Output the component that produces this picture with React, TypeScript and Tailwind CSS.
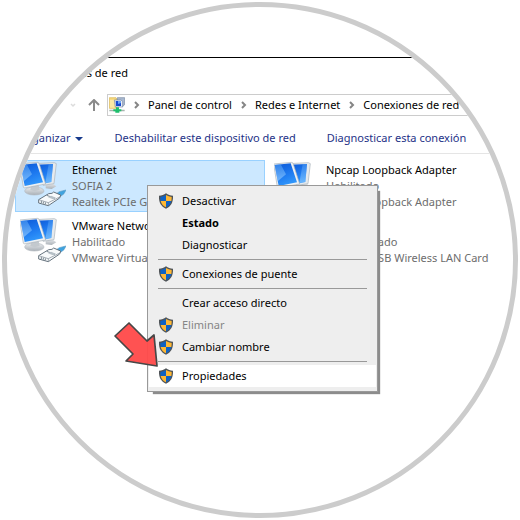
import React from 'react';

const ShieldIcon: React.FC = () => (
    <svg className="h-4 w-4" viewBox="0 0 48 48" aria-hidden="true">
        <path d="M24 1c6 4 13 7 21 7 1 20-6 32-21 39C9 40 2 28 3 8c8 0 15-3 21-7z" fill="#4f5458" />
        <path d="M24 6v18H8C7 20 7 16 7 12c6-1 12-3 17-6z" fill="#0f62c4" />
        <path d="M24 6c5 3 11 5 17 6 0 4 0 8-1 12H24z" fill="#ffb834" />
        <path d="M8 24h16v19C15 39 10 33 8 24z" fill="#ffb834" />
        <path d="M24 24h16c-2 9-7 15-16 19z" fill="#0f62c4" />
    </svg>
);

const NetworkIcon: React.FC = () => (
    <svg className="h-[46px] w-[46px] shrink-0" viewBox="0 0 138 138" aria-hidden="true">
        <defs>
            <linearGradient id="screen" x1="0" y1="0" x2="0.4" y2="1">
                <stop offset="0" stopColor="#0b57d6" />
                <stop offset="0.6" stopColor="#1e7af0" />
                <stop offset="1" stopColor="#2f95fa" />
            </linearGradient>
            <linearGradient id="gloss" x1="0" y1="0" x2="0" y2="1">
                <stop offset="0" stopColor="#4c9df5" />
                <stop offset="1" stopColor="#a4d6ff" />
            </linearGradient>
            <linearGradient id="stand" x1="0" y1="0" x2="0" y2="1">
                <stop offset="0" stopColor="#eceef0" />
                <stop offset="1" stopColor="#a9b0b7" />
            </linearGradient>
        </defs>
        <path d="M77 68l18-2 14 10-14 8-18-2z" fill="url(#stand)" />
        <path d="M42 8l61-3 6 3-7 60-33 5z" fill="#e6eaed" stroke="#a9b2ba" strokeWidth="2" />
        <path d="M46 11l53-2-5 54-24 5z" fill="url(#screen)" />
        <path d="M99 9l-5 54-18 3 10-56z" fill="url(#gloss)" opacity="0.5" />
        <ellipse cx="43" cy="90" rx="29" ry="12" fill="url(#stand)" stroke="#b3bac0" strokeWidth="2" />
        <path d="M34 75l22-3 3 14-15 5-13-4z" fill="#c3c9ce" />
        <path d="M-1 9l53-5 5 2 20 63-64 12-3-3z" fill="#eef1f3" stroke="#a9b2ba" strokeWidth="2" />
        <path d="M2 12l48-5 19 57-55 11z" fill="url(#screen)" />
        <path d="M2 12l18-2 16 30-25 21z" fill="url(#gloss)" opacity="0.6" />
        <path d="M104 102l14-10 20-5-6 11-18 14z" fill="#3fa3e0" stroke="#5a9cc4" strokeWidth="2" />
        <path d="M56 116l30-18 10-1 5-4 21 9-3 9-34 23-29-8z" fill="#f8fafb" stroke="#66737e" strokeWidth="3" />
        <path d="M56 116l29 9v9M85 125l34-17" fill="none" stroke="#7a8791" strokeWidth="2" />
        <path d="M64 120v6M70 122v6M76 124v6M80 103l25 9" fill="none" stroke="#7a8791" strokeWidth="3" />
        <path d="M84 109l15 6 9-5-15-6z" fill="#b6c0c7" />
    </svg>
);

const FolderNetworkIcon: React.FC = () => (
    <svg className="h-4 w-4 shrink-0" viewBox="0 0 48 48" aria-hidden="true">
        <path d="M1 2h20l3 4v28H1z" fill="#f4d67a" stroke="#d9b654" strokeWidth="2" />
        <path d="M3 8h14v24H3z" fill="#fbe9a3" />
        <path d="M25 2h22v20l-5 6H25z" fill="#a9b9d0" stroke="#7787a0" strokeWidth="2" />
        <path d="M16 9h20l5 4v17H19z" fill="#e9edf5" stroke="#7385a5" strokeWidth="2" />
        <path d="M20 12h16v15H21z" fill="#174bd1" />
        <path d="M27 12h9v6l-9 3z" fill="#6ea5f6" />
        <path d="M1 38h46v5H1z" fill="#a7b4ae" />
        <path d="M21 31h9v6h7v6h-6v4H19v-4h-6v-6h8z" fill="#1fbe6c" />
    </svg>
);

const ChevronIcon: React.FC = () => (
    <svg className="h-2 w-2 shrink-0" viewBox="0 0 8 8" fill="none" stroke="#858585" strokeWidth="2" aria-hidden="true">
        <path d="M2 1l3 3-3 3" />
    </svg>
);

interface Adapter {
    name: string;
    status: string;
    device: string;
    selected?: boolean;
}

const adapters: Adapter[] = [
    { name: 'Ethernet', status: 'SOFIA 2', device: 'Realtek PCIe GBE Family', selected: true },
    { name: 'Npcap Loopback Adapter', status: 'Habilitado', device: 'Npcap Loopback Adapter' },
    { name: 'VMware Network Adapter', status: 'Habilitado', device: 'VMware Virtual Ethernet' },
    { name: 'Wi-Fi', status: 'Deshabilitado', device: '802.11n USB Wireless LAN Card' },
];

interface MenuEntry {
    label: string;
    shield?: boolean;
    bold?: boolean;
    disabled?: boolean;
    active?: boolean;
}

const menuGroups: MenuEntry[][] = [
    [{ label: 'Desactivar', shield: true }, { label: 'Estado', bold: true }, { label: 'Diagnosticar' }],
    [{ label: 'Conexiones de puente', shield: true }],
    [
        { label: 'Crear acceso directo' },
        { label: 'Eliminar', shield: true, disabled: true },
        { label: 'Cambiar nombre', shield: true },
    ],
    [{ label: 'Propiedades', shield: true, active: true }],
];

const AdapterTile: React.FC<{ adapter: Adapter }> = ({ adapter }) => (
    <button
        type="button"
        className={`flex h-[52px] w-[250px] gap-[6px] border pl-1 text-left ${
            adapter.selected ? 'border-[#99d1ff] bg-[#cce8ff]' : 'border-transparent'
        }`}
    >
        <NetworkIcon />
        <span className="flex flex-col whitespace-nowrap pt-px leading-4 text-[#6d6d6d]">
            <span className="text-black">{adapter.name}</span>
            <span>{adapter.status}</span>
            <span>{adapter.device}</span>
        </span>
    </button>
);

const ContextMenu: React.FC = () => (
    <div
        role="menu"
        className="absolute left-[140px] top-[178px] w-[231px] border border-[#999] bg-[#eee] px-px pb-1 pt-1 shadow-[4px_4px_1px_-2px_#8c8c8c]"
    >
        {menuGroups.map((group, index) => (
            <div key={index} role="group">
                {index > 0 && <hr className="mx-[9px] my-[3px] border-t border-[#999]" />}
                {group.map((entry) => (
                    <button
                        key={entry.label}
                        type="button"
                        role="menuitem"
                        disabled={entry.disabled}
                        className={`flex h-[22px] w-full items-center gap-2 pl-[9px] text-left ${
                            entry.active ? 'bg-white' : ''
                        } ${entry.bold ? 'font-bold' : ''} ${entry.disabled ? 'text-[#858585]' : 'text-black'}`}
                    >
                        <span className="h-4 w-4 shrink-0">{entry.shield && <ShieldIcon />}</span>
                        {entry.label}
                    </button>
                ))}
            </div>
        ))}
    </div>
);

const crumbs = ['Panel de control', 'Redes e Internet', 'Conexiones de red'];

const App: React.FC = () => (
    <div className="bg-white p-0.5 font-['Noto_Sans','Open_Sans',sans-serif] text-[11px] text-black">
        <main className="relative aspect-square w-full overflow-hidden rounded-full border-[5px] border-[#ccc] bg-white">
            <header className="mt-[50px] border-t border-black">
                <h1 className="ml-[25px] mt-[7px] leading-4">Conexiones de red</h1>
                <nav className="mt-[13px] flex h-[22px] items-center" aria-label="Ruta">
                    <button type="button" aria-label="Recientes" className="ml-[62px]">
                        <svg className="h-2 w-2" viewBox="0 0 8 8" fill="none" stroke="#dcdcdc" strokeWidth="1.5">
                            <path d="M2 3l2 2 2-2" />
                        </svg>
                    </button>
                    <button type="button" aria-label="Subir" className="ml-[11px]">
                        <svg className="h-3 w-3" viewBox="0 0 12 12" fill="none" stroke="#8a8a8a" strokeWidth="2">
                            <path d="M6 12V1M1 6l5-5 5 5" />
                        </svg>
                    </button>
                    <ol className="ml-[7px] flex h-full flex-1 items-center whitespace-nowrap border border-r-0 border-[#ccc] pl-px">
                        <li>
                            <FolderNetworkIcon />
                        </li>
                        {crumbs.map((crumb) => (
                            <li key={crumb} className="flex items-center gap-[7px] pl-2">
                                <ChevronIcon />
                                <a href="#">{crumb}</a>
                            </li>
                        ))}
                    </ol>
                </nav>
            </header>

            <div className="flex h-[38px] items-center whitespace-nowrap border-b border-[#e5e5e5] pl-3 pt-2 text-[#1e3287]">
                <button type="button" className="flex items-center gap-[5px]">
                    Organizar
                    <svg className="h-1 w-2" viewBox="0 0 8 4" fill="#173a8c" aria-hidden="true">
                        <path d="M0 0h8L4 4z" />
                    </svg>
                </button>
                <button type="button" className="ml-[31px]">Deshabilitar este dispositivo de red</button>
                <button type="button" className="ml-[31px]">Diagnosticar esta conexión</button>
            </div>

            <section className="ml-2 mt-[6px] grid grid-cols-[254px_254px] gap-y-1">
                {adapters.map((adapter) => (
                    <AdapterTile key={adapter.name} adapter={adapter} />
                ))}
            </section>

            <ContextMenu />

            <svg className="absolute left-[105px] top-[313px] h-[50px] w-[50px]" viewBox="112 320 50 50" aria-hidden="true">
                <path
                    d="M115 336l14-13 18 18 7-6 3 31-31-5 7-7z"
                    fill="#ff4b4b"
                    fillOpacity="0.96"
                    stroke="#474747"
                    strokeWidth="1.7"
                    strokeLinejoin="round"
                />
            </svg>
        </main>
    </div>
);

export default App;
